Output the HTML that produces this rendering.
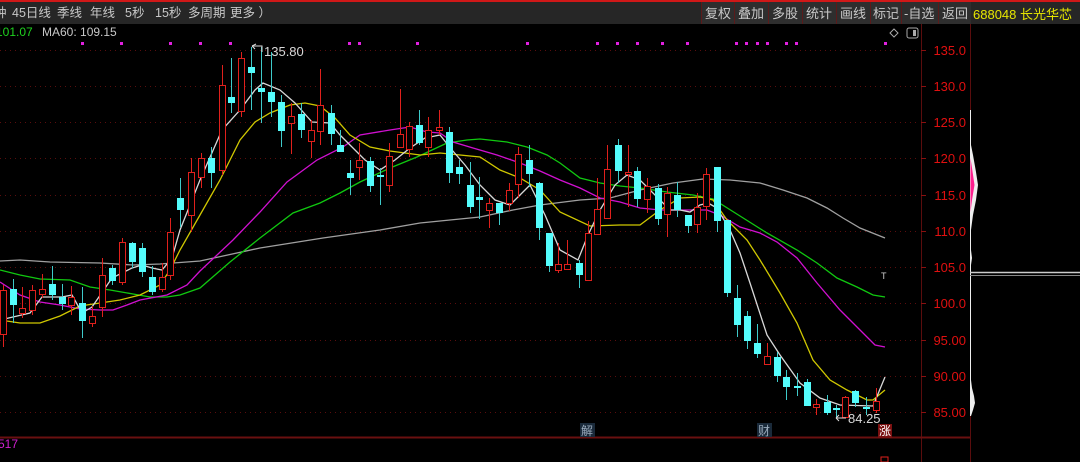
<!DOCTYPE html>
<html><head><meta charset="utf-8"><style>
html,body{margin:0;padding:0;background:#000;width:1080px;height:462px;overflow:hidden;font-family:"Liberation Sans","Noto Sans CJK SC",sans-serif}
.top{position:absolute;left:0;top:0;width:1080px;height:24px;background:#262626;border-top:2px solid #d01818;box-sizing:border-box}
.t{position:absolute;top:4px;font-size:12.5px;color:#c8c8c8;white-space:pre;line-height:15px}
.b{position:absolute;top:0;height:22px;border-left:1px solid #5a1a1a;background:#2e2e2e}
.bt{position:absolute;top:4px;font-size:13px;color:#c8c8c8;line-height:15px;white-space:pre}
.code{position:absolute;left:973px;top:5px;font-size:13px;color:#e6e600;line-height:15px}
</style></head><body>
<div class="top">
<span class="t" style="left:-6px">钟</span><span class="t" style="left:12px">45日线</span><span class="t" style="left:57px">季线</span><span class="t" style="left:90px">年线</span><span class="t" style="left:125px">5秒</span><span class="t" style="left:155px">15秒</span><span class="t" style="left:188px">多周期</span><span class="t" style="left:230px">更多 ）</span>
<div class="b" style="left:701px;width:35px"></div><div class="b" style="left:734px;width:34px"></div><div class="b" style="left:768px;width:34px"></div><div class="b" style="left:802px;width:34px"></div><div class="b" style="left:836px;width:34px"></div><div class="b" style="left:870px;width:31px"></div><div class="b" style="left:901px;width:37px"></div><div class="b" style="left:938px;width:32px"></div>
<span class="bt" style="left:705px">复权</span><span class="bt" style="left:738px">叠加</span><span class="bt" style="left:772px">多股</span><span class="bt" style="left:806px">统计</span><span class="bt" style="left:840px">画线</span><span class="bt" style="left:873px">标记</span><span class="bt" style="left:904px">-自选</span><span class="bt" style="left:942px">返回</span>
<div class="code">688048 长光华芯</div>
</div>
<svg width="1080" height="462" style="position:absolute;left:0;top:0" xmlns="http://www.w3.org/2000/svg">
<text x="-4" y="36" font-size="12" fill="#1fd31f" font-family="Liberation Sans">101.07</text>
<text x="42" y="36" font-size="12" fill="#c8c8c8" font-family="Liberation Sans">MA60: 109.15</text>
<g stroke="#5a0d0d" stroke-width="1" stroke-dasharray="1,4">
<line x1="0" y1="50.5" x2="920" y2="50.5"/><line x1="0" y1="86.5" x2="920" y2="86.5"/><line x1="0" y1="122.5" x2="920" y2="122.5"/><line x1="0" y1="158.5" x2="920" y2="158.5"/><line x1="0" y1="195.5" x2="920" y2="195.5"/><line x1="0" y1="231.5" x2="920" y2="231.5"/><line x1="0" y1="267.5" x2="920" y2="267.5"/><line x1="0" y1="303.5" x2="920" y2="303.5"/><line x1="0" y1="340.5" x2="920" y2="340.5"/><line x1="0" y1="376.5" x2="920" y2="376.5"/><line x1="0" y1="412.5" x2="920" y2="412.5"/>
</g>
<line x1="921.5" y1="24" x2="921.5" y2="462" stroke="#5a0d0d"/>
<line x1="970.5" y1="24" x2="970.5" y2="462" stroke="#5a0d0d"/>
<line x1="0" y1="437.5" x2="970" y2="437.5" stroke="#6a1010" stroke-width="2"/>
<g stroke="#8a1010"><line x1="921" y1="50.5" x2="926" y2="50.5"/><line x1="921" y1="86.5" x2="926" y2="86.5"/><line x1="921" y1="122.5" x2="926" y2="122.5"/><line x1="921" y1="158.5" x2="926" y2="158.5"/><line x1="921" y1="195.5" x2="926" y2="195.5"/><line x1="921" y1="231.5" x2="926" y2="231.5"/><line x1="921" y1="267.5" x2="926" y2="267.5"/><line x1="921" y1="303.5" x2="926" y2="303.5"/><line x1="921" y1="340.5" x2="926" y2="340.5"/><line x1="921" y1="376.5" x2="926" y2="376.5"/><line x1="921" y1="412.5" x2="926" y2="412.5"/></g>
<g fill="#e01010" font-size="13" font-family="Liberation Sans" text-anchor="end">
<text x="966" y="55">135.0</text><text x="966" y="91">130.0</text><text x="966" y="127">125.0</text><text x="966" y="163">120.0</text><text x="966" y="200">115.0</text><text x="966" y="236">110.0</text><text x="966" y="272">105.0</text><text x="966" y="308">100.0</text><text x="966" y="345">95.00</text><text x="966" y="381">90.00</text><text x="966" y="417">85.00</text>
</g>
<path d="M970,110 L971,110 L971,145 L973,155 L976,172 L978,185 L976,200 L973,215 L971,230 L971,250 L972,258 L971,265 L971,380 L972,388 L974,396 L975,403 L973,410 L971,416 L970,416 Z" fill="#eee"/>
<path d="M970.5,158 L972,168 L974.5,185 L972,200 L970.5,212 Z" fill="#ff1f8f"/>
<line x1="970" y1="272.5" x2="1080" y2="272.5" stroke="#ccc" stroke-width="1.5"/>
<line x1="970" y1="275.5" x2="1080" y2="275.5" stroke="#888" stroke-width="1"/>
<g fill="#e020e0">
<rect x="81" y="42" width="3" height="3"/><rect x="120" y="42" width="3" height="3"/><rect x="169" y="42" width="3" height="3"/><rect x="199" y="42" width="3" height="3"/><rect x="229" y="42" width="3" height="3"/><rect x="348" y="42" width="3" height="3"/><rect x="358" y="42" width="3" height="3"/><rect x="416" y="42" width="3" height="3"/><rect x="526" y="42" width="3" height="3"/><rect x="596" y="42" width="3" height="3"/><rect x="616" y="42" width="3" height="3"/><rect x="636" y="42" width="3" height="3"/><rect x="661" y="42" width="3" height="3"/><rect x="686" y="42" width="3" height="3"/><rect x="735" y="42" width="3" height="3"/><rect x="745" y="42" width="3" height="3"/><rect x="756" y="42" width="3" height="3"/><rect x="766" y="42" width="3" height="3"/><rect x="785" y="42" width="3" height="3"/><rect x="795" y="42" width="3" height="3"/><rect x="884" y="42" width="3" height="3"/>
</g>
<path d="M894,29 L898,33 L894,37 L890,33 Z" fill="none" stroke="#aaa"/>
<rect x="907" y="28" width="11" height="10" rx="2" fill="none" stroke="#aaa"/><rect x="913" y="30" width="3" height="6" fill="#aaa"/>
<g fill="none" stroke-width="1.3">
<polyline stroke="#a0a0a0" points="0,261 20,260 50,262 100,263 133,265 160,264 200,261 260,248 323,238 380,230 420,223 450,220 480,217 513,210 540,205 580,200 610,198 640,190 673,183 703,179 730,180 760,183 783,190 807,198 827,208 843,218 860,228 885,238"/>
<polyline stroke="#10c810" points="0,270 20,275 40,279 70,280 90,287 110,290 133,294 150,297 167,297 180,295 200,288 230,262 260,238 293,213 320,203 340,193 360,182 390,168 417,157 447,143 467,140 480,139 507,142 527,147 547,155 560,163 580,178 600,183 620,186 640,188 667,192 693,195 713,199 740,216 767,233 797,250 817,263 837,278 857,287 873,295 885,297"/>
<polyline stroke="#d010d0" points="0,282 20,295 40,302 60,305 80,309 100,310 113,310 127,305 140,300 167,295 187,285 200,271 233,240 260,212 287,182 317,160 343,147 360,135 390,130 410,127 427,132 440,133 453,142 473,148 497,155 520,163 540,171 560,180 580,188 600,198 620,202 640,208 660,210 680,210 707,210 720,215 740,227 760,233 777,242 797,258 817,283 840,310 860,330 875,345 885,347"/>
<polyline stroke="#d0c800" points="0,320 20,323 40,323 60,316 80,306 100,303 120,300 140,295 160,285 170,270 180,250 200,215 220,180 240,140 255,122 270,113 290,105 305,103 320,106 335,118 350,135 370,147 390,151 420,155 440,153 480,157 500,170 520,178 540,190 560,212 590,226 620,225 640,225 660,210 680,198 700,197 713,200 727,220 747,240 760,260 780,293 797,323 813,360 830,380 847,390 867,400 873,400 885,390"/>
<polyline stroke="#d8d8d8" points="0,320 30,313 42,297 62,297 72,295 82,313 92,307 112,278 132,268 142,265 152,268 162,270 172,258 180,230 200,180 222,130 240,110 255,90 263,83 280,90 295,103 312,122 330,123 340,135 355,150 365,160 380,170 395,160 410,148 425,138 440,135 452,150 465,165 480,185 495,200 510,205 520,195 530,185 545,215 560,250 578,260 588,235 600,210 615,185 627,175 640,180 650,190 660,200 670,210 680,210 690,212 700,205 708,203 717,208 730,230 740,253 750,283 767,335 780,355 800,383 820,398 840,405 873,406 885,377"/>
</g>
<g stroke-width="1" shape-rendering="crispEdges">
<g stroke="#e0201c">
<line x1="3.5" y1="285" x2="3.5" y2="347"/><line x1="22.5" y1="287" x2="22.5" y2="318"/><line x1="32.5" y1="285" x2="32.5" y2="315"/><line x1="42.5" y1="274" x2="42.5" y2="298"/><line x1="71.5" y1="286" x2="71.5" y2="315"/><line x1="92.5" y1="306" x2="92.5" y2="327"/><line x1="102.5" y1="258" x2="102.5" y2="317"/><line x1="122.5" y1="238" x2="122.5" y2="285"/><line x1="162.5" y1="263" x2="162.5" y2="292"/><line x1="170.5" y1="218" x2="170.5" y2="280"/><line x1="191.5" y1="158" x2="191.5" y2="232"/><line x1="201.5" y1="153" x2="201.5" y2="188"/><line x1="222.5" y1="65" x2="222.5" y2="175"/><line x1="241.5" y1="52" x2="241.5" y2="117"/><line x1="291.5" y1="103" x2="291.5" y2="154"/><line x1="311.5" y1="120" x2="311.5" y2="158"/><line x1="320.5" y1="69" x2="320.5" y2="145"/><line x1="359.5" y1="143" x2="359.5" y2="180"/><line x1="389.5" y1="143" x2="389.5" y2="192"/><line x1="400.5" y1="89" x2="400.5" y2="147"/><line x1="409.5" y1="122" x2="409.5" y2="157"/><line x1="428.5" y1="117" x2="428.5" y2="157"/><line x1="439.5" y1="110" x2="439.5" y2="135"/><line x1="489.5" y1="198" x2="489.5" y2="228"/><line x1="509.5" y1="183" x2="509.5" y2="211"/><line x1="518.5" y1="147" x2="518.5" y2="198"/><line x1="558.5" y1="243" x2="558.5" y2="273"/><line x1="567.5" y1="240" x2="567.5" y2="269"/><line x1="588.5" y1="221" x2="588.5" y2="280"/><line x1="597.5" y1="178" x2="597.5" y2="234"/><line x1="607.5" y1="145" x2="607.5" y2="219"/><line x1="628.5" y1="145" x2="628.5" y2="207"/><line x1="647.5" y1="178" x2="647.5" y2="213"/><line x1="667.5" y1="187" x2="667.5" y2="237"/><line x1="697.5" y1="193" x2="697.5" y2="233"/><line x1="706.5" y1="168" x2="706.5" y2="220"/><line x1="767.5" y1="343" x2="767.5" y2="365"/><line x1="816.5" y1="399" x2="816.5" y2="415"/><line x1="845.5" y1="396" x2="845.5" y2="417"/><line x1="876.5" y1="388" x2="876.5" y2="413"/>
</g>
<g stroke="#3ecaca">
<line x1="13.5" y1="279" x2="13.5" y2="323"/><line x1="52.5" y1="266" x2="52.5" y2="300"/><line x1="62.5" y1="284" x2="62.5" y2="310"/><line x1="82.5" y1="287" x2="82.5" y2="338"/><line x1="112.5" y1="265" x2="112.5" y2="285"/><line x1="132.5" y1="242" x2="132.5" y2="268"/><line x1="142.5" y1="243" x2="142.5" y2="277"/><line x1="152.5" y1="266" x2="152.5" y2="295"/><line x1="180.5" y1="178" x2="180.5" y2="227"/><line x1="211.5" y1="147" x2="211.5" y2="188"/><line x1="231.5" y1="58" x2="231.5" y2="113"/><line x1="251.5" y1="47" x2="251.5" y2="110"/><line x1="261.5" y1="47" x2="261.5" y2="123"/><line x1="271.5" y1="52" x2="271.5" y2="117"/><line x1="281.5" y1="95" x2="281.5" y2="147"/><line x1="301.5" y1="103" x2="301.5" y2="138"/><line x1="331.5" y1="105" x2="331.5" y2="145"/><line x1="340.5" y1="130" x2="340.5" y2="152"/><line x1="350.5" y1="160" x2="350.5" y2="195"/><line x1="370.5" y1="157" x2="370.5" y2="192"/><line x1="380.5" y1="168" x2="380.5" y2="205"/><line x1="419.5" y1="110" x2="419.5" y2="145"/><line x1="449.5" y1="127" x2="449.5" y2="183"/><line x1="459.5" y1="160" x2="459.5" y2="184"/><line x1="470.5" y1="162" x2="470.5" y2="213"/><line x1="479.5" y1="177" x2="479.5" y2="219"/><line x1="499.5" y1="203" x2="499.5" y2="225"/><line x1="529.5" y1="145" x2="529.5" y2="187"/><line x1="539.5" y1="182" x2="539.5" y2="240"/><line x1="549.5" y1="233" x2="549.5" y2="272"/><line x1="579.5" y1="260" x2="579.5" y2="288"/><line x1="618.5" y1="139" x2="618.5" y2="183"/><line x1="637.5" y1="167" x2="637.5" y2="207"/><line x1="658.5" y1="184" x2="658.5" y2="225"/><line x1="677.5" y1="182" x2="677.5" y2="217"/><line x1="688.5" y1="215" x2="688.5" y2="233"/><line x1="717.5" y1="167" x2="717.5" y2="232"/><line x1="727.5" y1="220" x2="727.5" y2="297"/><line x1="737.5" y1="285" x2="737.5" y2="337"/><line x1="747.5" y1="311" x2="747.5" y2="349"/><line x1="757.5" y1="324" x2="757.5" y2="358"/><line x1="777.5" y1="352" x2="777.5" y2="382"/><line x1="786.5" y1="370" x2="786.5" y2="400"/><line x1="797.5" y1="373" x2="797.5" y2="396"/><line x1="807.5" y1="379" x2="807.5" y2="406"/><line x1="827.5" y1="395" x2="827.5" y2="415"/><line x1="836.5" y1="405" x2="836.5" y2="417"/><line x1="855.5" y1="390" x2="855.5" y2="407"/><line x1="866.5" y1="397" x2="866.5" y2="415"/>
</g>
<g stroke="#e0201c" fill="#000">
<rect x="0.5" y="290.5" width="6" height="44"/><rect x="19.5" y="308.5" width="6" height="5"/><rect x="29.5" y="290.5" width="6" height="20"/><rect x="39.5" y="289.5" width="6" height="5"/><rect x="68.5" y="297.5" width="6" height="8"/><rect x="89.5" y="316.5" width="6" height="7"/><rect x="99.5" y="275.5" width="6" height="32"/><rect x="119.5" y="242.5" width="6" height="40"/><rect x="159.5" y="277.5" width="6" height="12"/><rect x="167.5" y="232.5" width="6" height="43"/><rect x="188.5" y="172.5" width="6" height="43"/><rect x="198.5" y="158.5" width="6" height="19"/><rect x="219.5" y="85.5" width="6" height="85"/><rect x="238.5" y="58.5" width="6" height="53"/><rect x="288.5" y="116.5" width="6" height="7"/><rect x="308.5" y="130.5" width="6" height="11"/><rect x="317.5" y="105.5" width="6" height="26"/><rect x="356.5" y="160.5" width="6" height="7"/><rect x="386.5" y="156.5" width="6" height="29"/><rect x="397.5" y="134.5" width="6" height="13"/><rect x="406.5" y="126.5" width="6" height="23"/><rect x="425.5" y="130.5" width="6" height="17"/><rect x="436.5" y="127.5" width="6" height="3"/><rect x="486.5" y="203.5" width="6" height="7"/><rect x="506.5" y="190.5" width="6" height="13"/><rect x="515.5" y="154.5" width="6" height="30"/><rect x="555.5" y="264.5" width="6" height="6"/><rect x="564.5" y="264.5" width="6" height="5"/><rect x="585.5" y="233.5" width="6" height="47"/><rect x="594.5" y="209.5" width="6" height="25"/><rect x="604.5" y="169.5" width="6" height="49"/><rect x="625.5" y="172.5" width="6" height="2"/><rect x="644.5" y="186.5" width="6" height="13"/><rect x="664.5" y="193.5" width="6" height="21"/><rect x="694.5" y="207.5" width="6" height="17"/><rect x="703.5" y="174.5" width="6" height="32"/><rect x="764.5" y="356.5" width="6" height="8"/><rect x="813.5" y="404.5" width="6" height="3"/><rect x="842.5" y="397.5" width="6" height="20"/><rect x="873.5" y="401.5" width="6" height="9"/>
</g>
<g fill="#54fcfc">
<rect x="10" y="289" width="7" height="16"/><rect x="49" y="284" width="7" height="11"/><rect x="59" y="297" width="7" height="7"/><rect x="79" y="303" width="7" height="18"/><rect x="109" y="268" width="7" height="13"/><rect x="129" y="243" width="7" height="19"/><rect x="139" y="248" width="7" height="24"/><rect x="149" y="277" width="7" height="15"/><rect x="177" y="198" width="7" height="12"/><rect x="208" y="158" width="7" height="15"/><rect x="228" y="97" width="7" height="6"/><rect x="248" y="67" width="7" height="6"/><rect x="258" y="88" width="7" height="4"/><rect x="268" y="92" width="7" height="10"/><rect x="278" y="102" width="7" height="29"/><rect x="298" y="114" width="7" height="16"/><rect x="328" y="113" width="7" height="21"/><rect x="337" y="145" width="7" height="7"/><rect x="347" y="173" width="7" height="5"/><rect x="367" y="161" width="7" height="25"/><rect x="377" y="175" width="7" height="2"/><rect x="416" y="125" width="7" height="18"/><rect x="446" y="132" width="7" height="41"/><rect x="456" y="167" width="7" height="7"/><rect x="467" y="185" width="7" height="22"/><rect x="476" y="197" width="7" height="3"/><rect x="496" y="203" width="7" height="10"/><rect x="526" y="160" width="7" height="14"/><rect x="536" y="183" width="7" height="45"/><rect x="546" y="233" width="7" height="33"/><rect x="576" y="263" width="7" height="12"/><rect x="615" y="145" width="7" height="26"/><rect x="634" y="171" width="7" height="28"/><rect x="655" y="188" width="7" height="31"/><rect x="674" y="195" width="7" height="15"/><rect x="685" y="215" width="7" height="11"/><rect x="714" y="167" width="7" height="54"/><rect x="724" y="220" width="7" height="73"/><rect x="734" y="298" width="7" height="27"/><rect x="744" y="316" width="7" height="25"/><rect x="754" y="343" width="7" height="11"/><rect x="774" y="357" width="7" height="19"/><rect x="783" y="377" width="7" height="10"/><rect x="794" y="386" width="7" height="2"/><rect x="804" y="382" width="7" height="24"/><rect x="824" y="402" width="7" height="11"/><rect x="833" y="408" width="7" height="2"/><rect x="852" y="391" width="7" height="12"/><rect x="863" y="407" width="7" height="2"/>
</g>
</g>
<path d="M262,52 L262,46 L252,46 M252,46 L256,44 M252,46 L255,49" stroke="#ddd" fill="none"/>
<text x="264" y="56" font-size="13" fill="#d8d8d8" font-family="Liberation Sans">135.80</text>
<path d="M846,418 L836,418 M836,418 L839,415 M836,418 L839,421" stroke="#ddd" fill="none"/>
<text x="848" y="423" font-size="13" fill="#d8d8d8" font-family="Liberation Sans">84.25</text>
<text x="881" y="279" font-size="9" fill="#ccc" font-family="Liberation Sans">T</text>
<rect x="580" y="423" width="15" height="14" fill="#1a2a3a"/>
<text x="581" y="435" font-size="12" fill="#9ab">解</text>
<rect x="757" y="423" width="15" height="14" fill="#1a2a3a"/>
<text x="758" y="435" font-size="12" fill="#9ab">财</text>
<rect x="878" y="424" width="14" height="14" fill="#7a1010"/>
<text x="879" y="435" font-size="12" fill="#fff">涨</text>
<text x="-2" y="448" font-size="12" fill="#d020d0" font-family="Liberation Sans">517</text>
<rect x="881" y="457" width="7" height="5" fill="none" stroke="#e0201c"/>
</svg>
</body></html>
